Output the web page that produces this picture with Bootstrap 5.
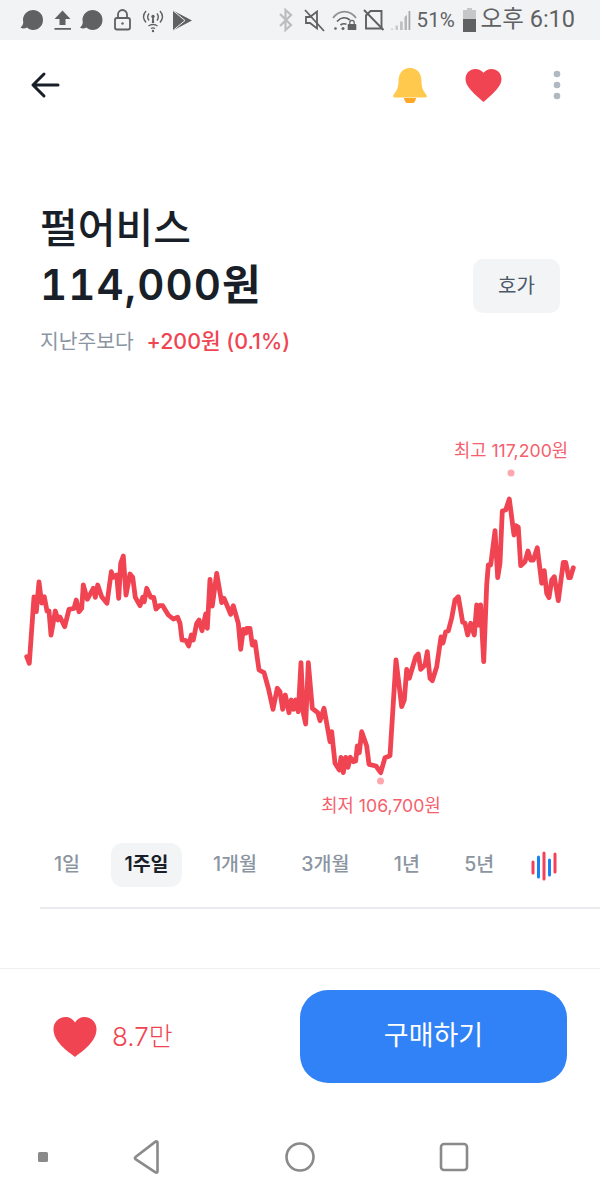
<!DOCTYPE html>
<html lang="ko">
  <head>
    <meta charset="utf-8" />
    <title>펄어비스</title>
    <link href="https://cdn.jsdelivr.net/npm/bootstrap@5.3.0/dist/css/bootstrap.min.css" rel="stylesheet" />
    <style>
      body {
        width: 600px;
        height: 1200px;
        overflow: hidden;
        background: #fff;
        color: #191f28;
        font-family: Inter, "Noto Sans CJK KR", sans-serif;
      }
      .status-strip {
        height: 40px;
        background: #f2f3f5;
        color: #5f6163;
        font-family: Roboto, "Noto Sans CJK KR", sans-serif;
      }
      .status-pct { font-size: 20.5px; margin-left: 5px; width: 46px; }
      .status-time { font-size: 23.5px; margin-left: 5px; margin-right: 25px; white-space: nowrap; }
      .top-nav { height: 90px; padding: 0 38px 0 30px; }
      .top-heart { margin-left: 37px; }
      .top-dots { margin-left: 50px; }
      .stock-head { height: 300px; padding: 70px 40px 0; }
      .stock-name { font-size: 41px; font-weight: 500; line-height: 56px; margin: 0; }
      .stock-price { font-size: 42px; font-weight: 600; line-height: 58px; letter-spacing: 1.1px; font-variant-numeric: tabular-nums; }
      .hoga-btn {
        width: 87px;
        height: 54px;
        margin-top: 1px;
        background: #f2f4f6;
        color: #4e5968;
        border: 0;
        border-radius: 10px;
        font-size: 20px;
      }
      .hoga-btn:hover { background: #f2f4f6; color: #4e5968; }
      .change-row { margin-top: 13px; font-size: 20.4px; line-height: 28px; }
      .change-label { color: #8b95a1; margin-right: 7px; }
      .change-val { color: #f04452; font-weight: 500; font-size: 21.4px; }
      .chart-wrap { position: relative; height: 411px; }
      .chart-wrap svg { display: block; }
      .chart-tag {
        position: absolute;
        transform: translateX(-50%);
        color: #f4606d;
        font-size: 17.7px;
        line-height: 24px;
        white-space: nowrap;
      }
      .tag-high { left: 511px; top: 9px; }
      .tag-low { left: 381px; top: 364px; }
      .range-row { height: 66px; padding: 2px 0 0 41px; gap: 18.4px; font-size: 19.5px; font-weight: 500; color: #8b95a1; }
      .range-tab { height: 44px; padding: 0 13px; border-radius: 12px; white-space: nowrap; }
      .range-tab.is-on { background: #f2f4f6; color: #191f28; font-weight: 600; }
      .range-icon { margin: 7px 0 0 5px; }
      .range-line { margin-left: 40px; height: 2px; background: #e8eaed; }
      .action-bar { margin-top: 59px; border-top: 1px solid #eef0f2; height: 162px; padding: 21px 33px 0 53px; }
      .like-count { color: #f04452; font-size: 26px; font-weight: 300; margin-left: 15px; }
      .buy-btn {
        width: 267px;
        height: 93px;
        background: #3182f6;
        border: 0;
        border-radius: 28px;
        color: #fff;
        font-size: 27px;
      }
      .buy-btn:hover { background: #3182f6; color: #fff; }
      .like-box { height: 93px; }
    </style>
  </head>
  <body>
    <div class="status-strip d-flex align-items-center justify-content-between">
      <svg width="200" height="40" viewBox="0 0 200 40" fill="#5f6163">
        <path d="M20.500 27.500c1.500-1 2.500-3 2.800-5A10 10 0 1 1 33 30c-2.500 0-4.500-1-6-2.500-2 1-4.500 1.500-6.500 0z" />
        <path d="M62.500 10.500l8 8.500h-5v6h-6v-6h-5zM54.500 28h16.500v1.800H54.500z" />
        <path d="M80 27.500c1.500-1 2.500-3 2.800-5A10 10 0 1 1 92.500 30c-2.500 0-4.500-1-6-2.500-2 1-4.500 1.500-6.500 0z" />
        <g fill="none" stroke="#5f6163" stroke-width="1.800">
          <rect x="115" y="18" width="15" height="11.500" rx="2" />
          <path d="M118 18v-3.500a4.500 4.500 0 0 1 9 0V18" />
          <path d="M146 11c-3 3.500-3 8 0 11.500M149 13.500c-1.500 2-1.500 5 0 7M160 11c3 3.500 3 8 0 11.500M157 13.500c1.500 2 1.500 5 0 7" stroke-width="1.400" />
          <path d="M148.500 26c2.500-2 6.500-2 9 0M151 28.500c1.300-.8 2.700-.8 4 0" stroke-width="1.400" />
        </g>
        <circle cx="122.500" cy="23.500" r="1.200" />
        <circle cx="153" cy="16.500" r="1.700" />
        <path d="M152.300 17h1.400l.5 6h-2.400z" />
        <circle cx="153" cy="31" r="1.200" />
        <path d="M173 10.500l19 10-19 10z" />
        <path d="M173 10.500l12 10-12 10" fill="none" stroke="#f2f3f5" stroke-width="1" />
      </svg>
      <div class="d-flex align-items-center">
        <svg width="142" height="40" viewBox="270 0 142 40">
          <path d="M280 14l11 11-5.500 5V10l5.500 5-11 11" fill="none" stroke="#bcbdbf" stroke-width="2.200" />
          <g fill="none" stroke="#5f6163" stroke-width="1.800">
            <path d="M306 17h4l7-5.500v17l-7-5.500h-4z" />
            <path d="M305 10l19 21" />
          </g>
          <path d="M333 18c6-8.500 17-8.500 23 0" fill="none" stroke="#8f9193" stroke-width="1.700" />
          <g fill="none" stroke="#5f6163" stroke-width="1.700">
            <path d="M337 21.500c4-4.500 9-4.500 13-1.500M340.500 25c2-1.500 4-1.500 6-.8" />
          </g>
          <circle cx="343" cy="28.500" r="1.500" fill="#5f6163" />
          <circle cx="335.500" cy="28.500" r="1.300" fill="#5f6163" />
          <path d="M348.500 24h7a.8.8 0 0 1 .8.8V30h-8.600v-5.200a.8.8 0 0 1 .8-.8z" fill="#5f6163" />
          <path d="M349.800 24v-1.500a2.200 2.200 0 0 1 4.400 0V24" fill="none" stroke="#5f6163" stroke-width="1.200" />
          <g fill="none" stroke="#5f6163" stroke-width="1.900">
            <path d="M366 15.500l4.500-4.500h11v17.500H366z" />
            <path d="M364 10l19.500 20" />
          </g>
          <path d="M391 28.500h2V30h-2z" fill="#d0d1d3" />
          <path d="M395.500 25.500h2.500V30h-2.500z" fill="#c8c9cb" />
          <path d="M400 21.500h2.800V30H400z" fill="#c0c1c3" />
          <path d="M404.500 17l2.500-2.200V30h-2.500z" fill="#b5b6b8" />
          <path d="M408.500 11h1.800v19h-1.800z" fill="#a8a9ab" />
        </svg>
        <span class="status-pct">51%</span>
        <svg width="13" height="24" viewBox="0 0 13 24">
          <path d="M4 0h5v2h4v22H0V2h4z" fill="#c6c7c9" />
          <path d="M0 11h13v13H0z" fill="#5f6163" />
        </svg>
        <span class="status-time">오후 6:10</span>
      </div>
    </div>

    <div class="top-nav d-flex align-items-center">
      <svg width="30" height="28" viewBox="0 0 30 28" fill="none" stroke="#191f28" stroke-width="3" stroke-linecap="round" stroke-linejoin="round">
        <path d="M3 14h25M14 3L3 14l11 11" />
      </svg>
      <svg class="ms-auto" width="36" height="36" viewBox="0 0 36 36">
        <path d="M12 31a6 6 0 0 0 12 0z" fill="#ffa726" />
        <path d="M18 1C9.500 1 6.500 8 6.500 14c0 7-2 10-5 14-.8 1.200-.3 2.500 1.200 2.500h30.600c1.500 0 2-1.300 1.200-2.500-3-4-5-7-5-14C29.500 8 26.500 1 18 1z" fill="#ffc94d" />
      </svg>
      <svg class="top-heart" width="37" height="33" viewBox="2 3 20 18.350" fill="#f04452">
        <path d="M12 21.350l-1.450-1.320C5.400 15.360 2 12.280 2 8.500 2 5.420 4.420 3 7.500 3c1.740 0 3.410.81 4.500 2.090C13.090 3.810 14.760 3 16.500 3 19.580 3 22 5.420 22 8.500c0 3.780-3.400 6.860-8.550 11.540L12 21.350z" />
      </svg>
      <svg class="top-dots" width="10" height="32" viewBox="0 0 10 32" fill="#b0b8c1">
        <circle cx="5" cy="5" r="3.300" />
        <circle cx="5" cy="16" r="3.300" />
        <circle cx="5" cy="27" r="3.300" />
      </svg>
    </div>

    <section class="stock-head">
      <h1 class="stock-name">펄어비스</h1>
      <div class="d-flex align-items-center justify-content-between">
        <div class="stock-price">114,000원</div>
        <button type="button" class="btn hoga-btn p-0">호가</button>
      </div>
      <div class="change-row">
        <span class="change-label">지난주보다</span>
        <span class="change-val">+200원 (0.1%)</span>
      </div>
    </section>

    <div class="chart-wrap">
      <span class="chart-tag tag-high">최고 117,200원</span>
      <span class="chart-tag tag-low">최저 106,700원</span>
      <svg width="600" height="411" viewBox="0 430 600 411">
        <circle cx="511" cy="473" r="3.500" fill="#ffa7ae" />
        <circle cx="380.500" cy="781" r="3.500" fill="#ffa7ae" />
        <polyline fill="none" stroke="#f04452" stroke-width="4.800" stroke-linejoin="round" stroke-linecap="round"
          points="26.700,656.700 29.300,663.300 34,597 36.300,611.700 39,582 41.700,603 44.300,596.700 47,611 49,611 51,635 55.300,611 58,620 60,617 64.700,626.700 69,609.300 74,608.300 76.300,600 79,611.700 81.700,608.300 83.300,585 87.300,599.300 93.300,588.300 95.300,597.300 97.700,585 101.700,596.700 107,603.300 111.300,571.700 113.300,577.300 116.700,575 118.700,598.300 120.700,563.300 123.300,556 126,595 130,574 132.700,577.300 135.300,597.300 140,605.700 142.700,597.300 144.300,601.700 146.700,588.300 150.700,597.300 153.700,597.300 156,609 159.300,605.700 162.700,605.700 168.300,615 173.300,619 177.700,617.300 180,623.300 182,640 186,640.700 188.700,646 191.300,635 193.300,640 196.700,623.300 199,620 202,630.700 205.700,614 207.300,628.300 210,579.300 212.300,606 216.700,573.300 221.700,602.700 224,598.300 230.700,614.300 233.300,605.700 238.300,623.300 240.700,649.300 243.300,629.300 246,633 246.700,628.300 250,628.300 252.300,645 255,641.700 259,670 264,672.700 268.300,688 273,709.300 277.300,688.300 280,691.700 282.700,709.300 285.300,695 289,712.700 291.300,700 293.700,709.300 295.700,700 298.300,711.700 301,662.700 303.300,713.300 305.700,724 308.300,662.700 312.300,708.300 317.700,712.700 320,720.700 324,708.300 330,741.700 331.700,731.700 335,763.300 339.300,770 341,757.300 343.300,772.700 345.700,757.300 348,767.300 350.300,757.300 353.300,761.700 355.700,761 357.300,746 359.300,752.700 361.700,731.700 366.700,746 369,764.300 376,766 380.700,772.700 385,757.700 390,755.700 396,660 401.700,706.700 404.300,700 406.700,669.300 409.300,678.300 415.700,656.700 418.300,654 420.700,669.300 425,665 427.300,651.700 430,678.300 432.300,680.700 436.700,666.700 441,637 443,643 445.700,631.700 448.300,631 451.700,618 455,600 458.300,596.700 462.700,622.300 465,623 467.700,635 470.700,623.300 474.300,635 476.700,605 478.300,625 480.700,605 481.700,625 483.700,661.700 486.700,585 488.300,565 490.700,565 495,530.700 497.700,577.700 500,563 502.300,511 505.700,510 509.300,499 514,535 516,525.700 518.300,527.300 520.700,565.700 525,561.700 528,551 530.700,560 533.300,560 537.300,547.700 541.700,583.300 544.300,570.700 546.700,593.300 549,597.700 551.700,580 554.300,576.700 558.300,600.700 563.300,562.300 565.700,562.300 568.700,577.700 570.300,577.700 573.300,567.700" />
      </svg>
    </div>

    <div class="range-row d-flex align-items-start">
      <span class="range-tab d-flex align-items-center">1일</span>
      <span class="range-tab is-on d-flex align-items-center">1주일</span>
      <span class="range-tab d-flex align-items-center">1개월</span>
      <span class="range-tab d-flex align-items-center">3개월</span>
      <span class="range-tab d-flex align-items-center">1년</span>
      <span class="range-tab d-flex align-items-center">5년</span>
      <svg class="range-icon" width="28" height="32" viewBox="0 0 28 32" fill="none" stroke-width="3" stroke-linecap="round">
        <path d="M2 12v11M13 3v26M24 4v18" stroke="#f5405a" />
        <path d="M7.500 7v20M18.500 10v15" stroke="#1a82f0" />
      </svg>
    </div>
    <div class="range-line"></div>

    <div class="action-bar d-flex align-items-start justify-content-between">
      <div class="like-box d-flex align-items-center">
        <svg width="44" height="40" viewBox="0 0 43 40" fill="#f04452">
          <path d="M21.500 40C14 34 0 25 0 12 0 5 5.500 0 12 0c4 0 7.500 2 9.500 5.500C23.500 2 27 0 31 0c6.500 0 12 5 12 12 0 13-14 22-21.500 28z" />
        </svg>
        <span class="like-count">8.7만</span>
      </div>
      <button type="button" class="btn buy-btn p-0">구매하기</button>
    </div>

    <svg class="d-block" width="600" height="60" viewBox="0 1130 600 60" fill="none" stroke="#8a8a8a" stroke-width="2.600" stroke-linejoin="round">
      <rect x="38" y="1152" width="10" height="10" rx="1.500" fill="#8a8a8a" stroke="none" />
      <path d="M157.500 1142.500v29c0 1-1 1.500-2 .8l-20-13.200c-.8-.6-.8-1.600 0-2.100l20-15.400c1-.6 2-.1 2 .9z" />
      <circle cx="300" cy="1157" r="13.500" />
      <rect x="441" y="1144" width="26" height="26" rx="3" />
    </svg>
  </body>
</html>
